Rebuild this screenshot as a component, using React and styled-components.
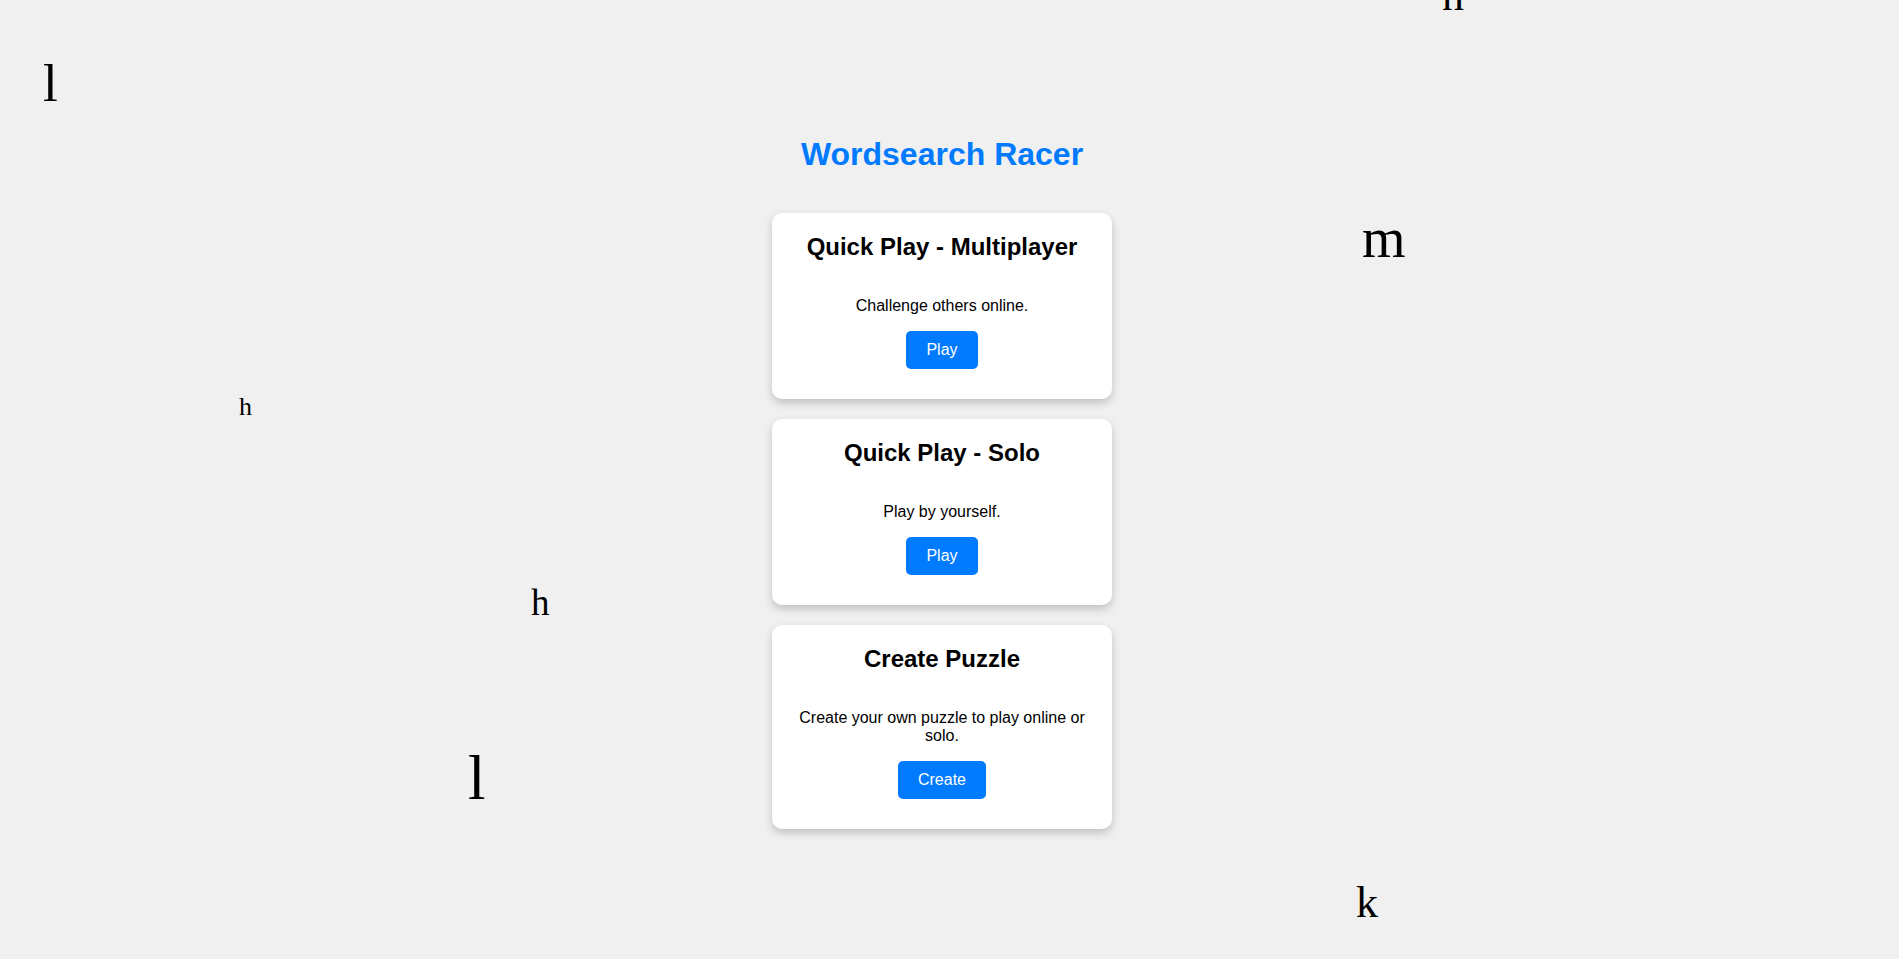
import styled, { createGlobalStyle } from 'styled-components'

const GlobalStyle = createGlobalStyle`
  body {
    margin: 0;
    background: #f0f0f0;
    font-family: 'Liberation Sans', Arial, sans-serif;
    overflow: hidden;
  }
`

const letters = [
  { char: 'l', size: 53, top: 57, left: 43 },
  { char: 'n', size: 44, top: -26, left: 1442 },
  { char: 'm', size: 56, top: 210, left: 1362 },
  { char: 'h', size: 26, top: 394, left: 239 },
  { char: 'h', size: 37, top: 584, left: 531 },
  { char: 'l', size: 63, top: 747, left: 468 },
  { char: 'k', size: 44, top: 881, left: 1356 },
]

const cards = [
  { title: 'Quick Play - Multiplayer', text: 'Challenge others online.', action: 'Play' },
  { title: 'Quick Play - Solo', text: 'Play by yourself.', action: 'Play' },
  { title: 'Create Puzzle', text: 'Create your own puzzle to play online or solo.', action: 'Create' },
]

const App = () => {
  return (
    <Page>
      <GlobalStyle />
      <Background aria-hidden='true'>
        {letters.map((l, index) => (
          <Letter key={index} $size={l.size} style={{ top: l.top, left: l.left }}>
            {l.char}
          </Letter>
        ))}
      </Background>
      <Main>
        <Title>Wordsearch Racer</Title>
        <CardList>
          {cards.map((card) => (
            <Card key={card.title}>
              <CardTitle>{card.title}</CardTitle>
              <CardText>{card.text}</CardText>
              <Button>{card.action}</Button>
            </Card>
          ))}
        </CardList>
      </Main>
    </Page>
  )
}

const Page = styled.div`
  position: relative;
  min-height: 959px;
  overflow: hidden;
`

const Background = styled.div`
  position: absolute;
  inset: 0;
  pointer-events: none;
`

const Letter = styled.span`
  position: absolute;
  font-family: 'Liberation Serif', 'Times New Roman', serif;
  font-size: ${(p) => p.$size}px;
  line-height: 1;
  color: #000;
`

const Main = styled.main`
  position: relative;
  display: flex;
  flex-direction: column;
  align-items: center;
  padding: 136px 15px 0 0;
`

const Title = styled.h1`
  margin: 0 0 40px;
  font-size: 32px;
  font-weight: 700;
  color: #007bff;
`

const CardList = styled.div`
  display: flex;
  flex-direction: column;
  gap: 20px;
`

const Card = styled.section`
  width: 300px;
  padding: 20px;
  display: flex;
  flex-direction: column;
  align-items: center;
  text-align: center;
  background: #fff;
  border-radius: 10px;
  box-shadow: 0 4px 8px rgba(0, 0, 0, 0.2);
`

const CardTitle = styled.h2`
  margin: 0 0 20px;
  font-size: 24px;
  font-weight: 700;
  color: #000;
`

const CardText = styled.p`
  margin: 16px 0;
  font-size: 16px;
  color: #000;
`

const Button = styled.button`
  margin-bottom: 10px;
  padding: 10px 20px;
  border: none;
  border-radius: 5px;
  background: #007bff;
  color: #fff;
  font-family: inherit;
  font-size: 16px;
  cursor: pointer;
`

export default App
